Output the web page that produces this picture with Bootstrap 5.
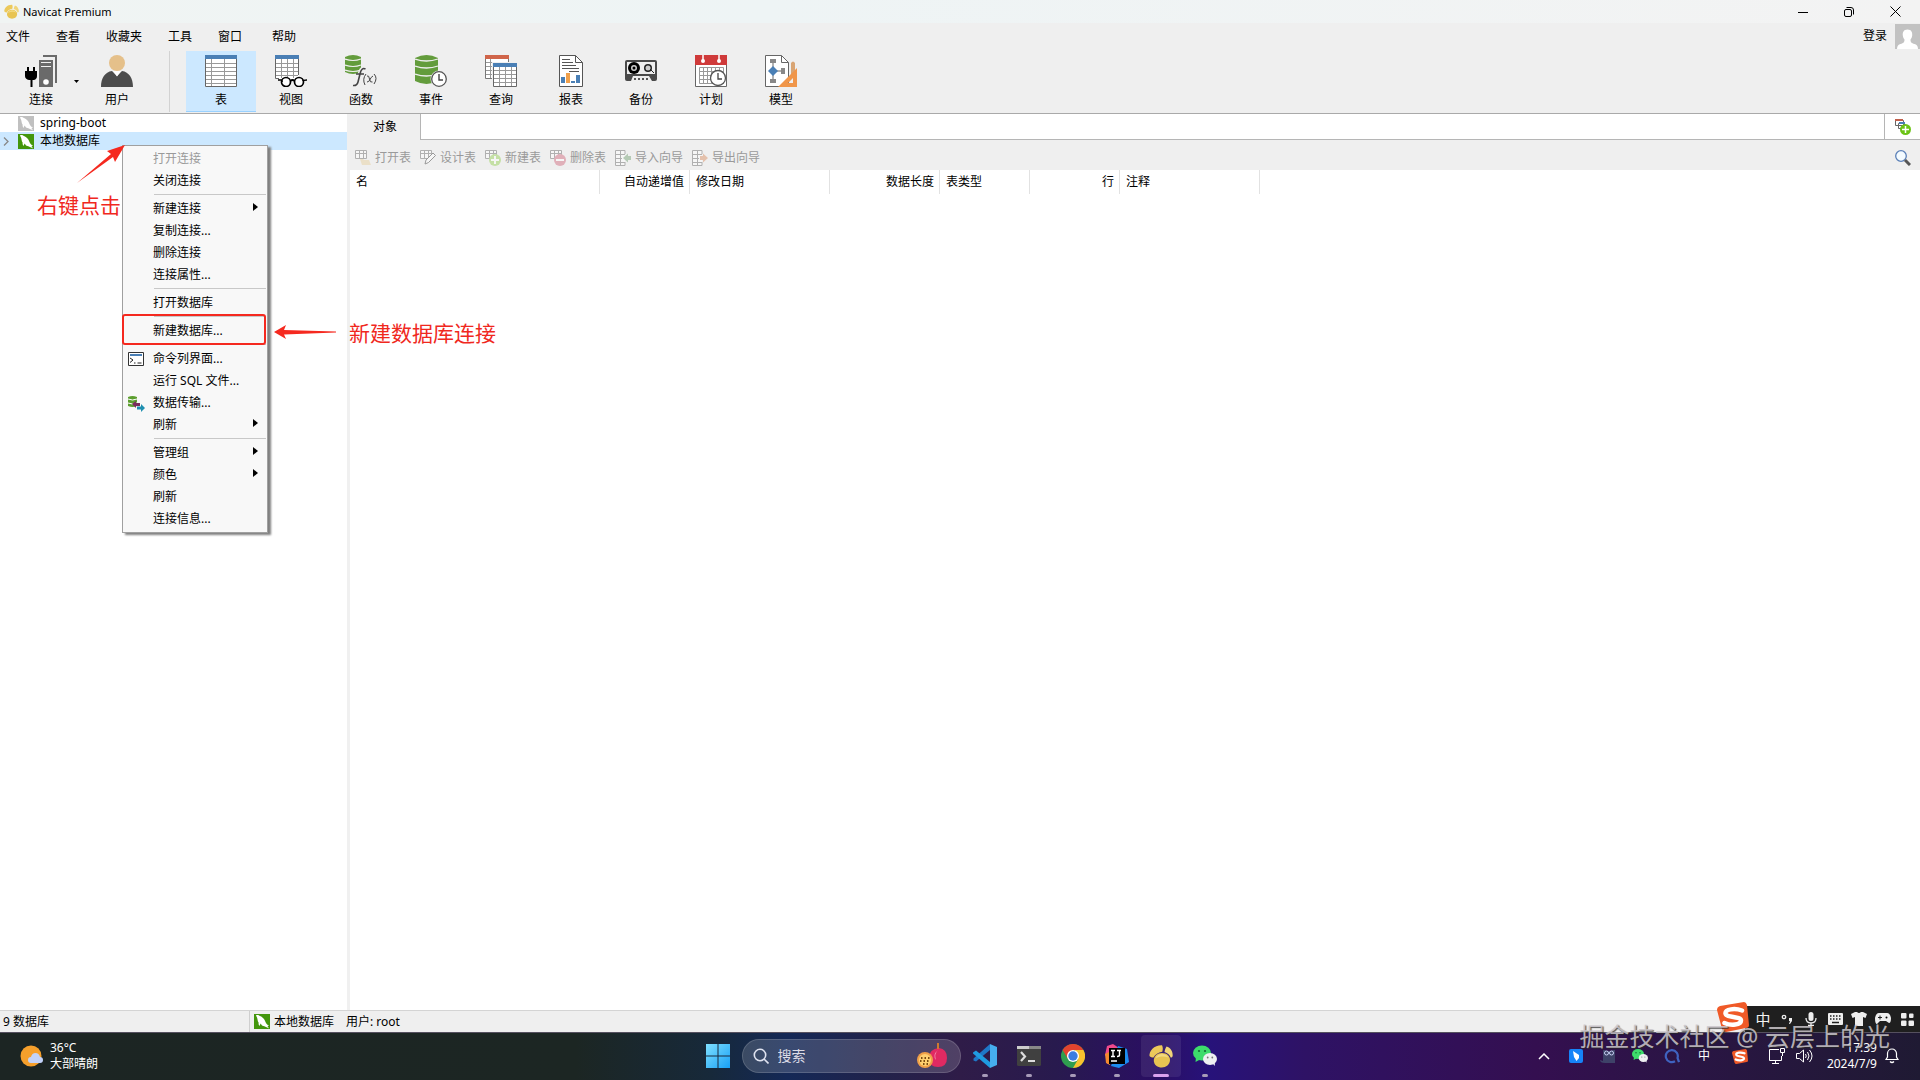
<!DOCTYPE html>
<html lang="zh-CN">
<head>
<meta charset="utf-8">
<meta name="viewport" content="width=device-width, initial-scale=1">
<title>Navicat Premium</title>
<link href="https://cdn.jsdelivr.net/npm/bootstrap@5.3.0/dist/css/bootstrap.min.css" rel="stylesheet">
<style>
body{font-family:"Noto Sans","Noto Sans CJK SC",sans-serif;font-size:12px;line-height:18px;color:#000;background:#fff;overflow:hidden}
button,input{font:inherit;color:inherit}
button{border:0;background:none;padding:0}
a{color:inherit;text-decoration:none}
svg{display:block;flex:none}
.chrome{background:#efefef}
.titlebar{height:23px;padding-right:2px;background:linear-gradient(90deg,#f0f4f3,#eef4f5 40%,#f3f3f3)}
.apptitle{font-size:11px}
.winbtn{width:46px;height:20px}
.menubar{height:26px;padding:2px 0 0 6px;gap:26px}
.account{height:26px}
.toolbar{height:65px;padding:2px 0 1px 12px;border-bottom:1px solid #a9a9a9}
.tool{width:70px;height:61px;padding-top:4px;display:flex;flex-direction:column;align-items:center;gap:4px}
.tool.conn{width:58px}
.tool.active{background:#cce8ff;border-bottom:1px solid #99d1ff}
.caretbtn{width:12px}
.toolsep{width:1px;background:#d2d2d2;margin:0 16px 0 17px}
.sidebar{flex:none;width:347px;background:#fff}
.splitter{flex:none;width:3px;background:#f0f0f0}
.treerow{height:18px;padding-left:18px;gap:6px;position:relative;white-space:nowrap}
.treerow.sel{background:#cce8ff}
.twist{position:absolute;left:3px;top:5px}
.tabs{height:26px;background:#fff;border-bottom:1px solid #b5b5b5}
.tabitem{width:71px;height:26px;background:#efefef;border-right:1px solid #b5b5b5}
.tabadd{width:36px;border-left:1px solid #b5b5b5}
.objbar{height:30px;padding:5px 9px 0 5px;gap:9px;color:#9a9a9a}
.objbar button{gap:4px}
.objbar button:disabled svg{opacity:.45}
.gridhead{table-layout:fixed;width:100%;border-collapse:separate;border-spacing:0}
.gridhead th{height:24px;font-weight:400;padding:0 5px 0 6px;border-right:1px solid #e2e2e2;white-space:nowrap}
.gridhead th:last-child{border:0}
.statusbar{height:22px;border-top:1px solid #d4d4d4}
.st-count{width:250px;padding-left:3px;border-right:1px solid #cfcfcf}
.ctx{left:122px;top:31px;width:146px;padding:2px 0;background:#f8f8f8;border:1px solid #a0a0a0;box-shadow:3px 2px 2px #808080;z-index:5}
.ctx button{display:flex;align-items:center;width:100%;height:22px;padding-left:30px;text-align:left;position:relative}
.ctx button:disabled{color:#9a9a9a}
.ctx hr{margin:2px 1px 3px 31px;border-top:1px solid #c8c8c8;opacity:1}
.ctx .ico{position:absolute;left:5px;top:4px}
.ctx .sub{position:absolute;right:9px;top:5px}
.redbox{left:122px;top:200px;width:144px;height:31px;border:2px solid #f5291f;border-radius:3px;z-index:6;pointer-events:none}
.note{color:#f0281e;font-size:21px;line-height:28px;white-space:nowrap;z-index:7}
.note1{left:37px;top:77px}
.note2{left:349px;top:205px}
.arrow1{left:76px;top:31px;z-index:7}
.arrow2{left:274px;top:210px;z-index:7}
.taskbar{height:48px;padding-bottom:1px;color:#fff;border-top:1px solid #55505f;background:linear-gradient(90deg,#1c2523 0,#1c2623 30%,#17293a 37%,#142856 41%,#22224a 46%,#2f1c48 50%,#281a4e 55%,#2a0f62 60%,#27127a 63%,#2e1265 68%,#340f50 80%,#2a1544 88%,#1f1a33 100%)}
.tside{flex:1 1 0}
.centre{padding-left:10px}
.weather{gap:7px;padding-left:20px;line-height:16px;color:#fff}
.search{width:219px;height:34px;border-radius:17px;background:rgba(255,255,255,.16);border:1px solid rgba(255,255,255,.15);padding:0 12px 0 10px;gap:9px}
.search input{flex:1;min-width:0;background:none;border:0;outline:0;font-size:14px;color:#fff;padding:0}
.search input::placeholder{color:#dcdce6;opacity:1}
.app{width:40px;height:42px;border-radius:4px;display:flex;align-items:center;justify-content:center;position:relative}
.app::after{content:"";position:absolute;bottom:0;width:6px;height:3px;border-radius:2px;background:#a79bb8}
.app.on{background:rgba(255,255,255,.08)}
.app.on::after{width:16px;background:#d9a2ee}
.tray button{width:32px;height:32px;display:flex;align-items:center;justify-content:center}
.tray .slim{width:24px}
.clock{width:64px;padding-right:3px;line-height:16px;text-align:right}
.ime{right:0;bottom:48px;height:26px;width:175px;padding-left:6px;background:#1f1f1f;z-index:8}
.ime button{width:24px;height:26px;display:flex;align-items:center;justify-content:center;color:#f2f2f2;font-size:15px}
.imelogo{position:absolute;left:-28px;top:-4px}
.wm{right:30px;bottom:26px;font-size:25px;line-height:36px;color:rgba(205,200,205,.85);text-shadow:1px 1px 1px rgba(40,40,40,.8);white-space:nowrap;z-index:9}
</style>
<script src="https://cdn.jsdelivr.net/npm/bootstrap@5.3.0/dist/js/bootstrap.bundle.min.js"></script>
</head>
<body class="vh-100 d-flex flex-column position-relative">
<svg width="0" height="0" class="position-absolute" aria-hidden="true">
<symbol id="dolphin" viewBox="0 0 16 15"><rect width="16" height="15"/><path fill="#fff" d="M2 1.200c1.600-.6 3 .1 4 .9 2.600 1 4.400 3 5.400 5.600.7 2 1.600 2.900 3.800 3.900l-1.700.5 1.500 2.300c-1.700-.7-3.300-1.800-4.700-2.200-1.200-.3-2.200-.3-2.800-1.500L6.600 9.500 5.500 12c-.9-1-1-2.300-.9-3.400C3.500 7 3.700 5.300 3 3.500 2.700 2.700 2.200 2 2 1.200z"/></symbol>
<symbol id="sogou" viewBox="0 0 32 30"><path fill="#f05a28" d="M3 4 27 0q2 0 3 3l2 20q0 3-3 3L9 30q-3 0-4-3L0 8q0-3 3-4z"/><path fill="none" stroke="#fff" stroke-width="4.500" stroke-linecap="round" d="M25 8.500C18 6 8 7 8.500 11.500S24 14 24 18.500 14 24 7.500 21"/></symbol>
<symbol id="wechat" viewBox="0 0 24 24"><ellipse cx="9" cy="9" rx="9" ry="7.500" fill="#3ddc6b"/><path d="m3 13-.5 5L8 15z" fill="#3ddc6b"/><circle cx="6" cy="7" r="1.100" fill="#146b33"/><circle cx="12" cy="7" r="1.100" fill="#146b33"/><ellipse cx="17" cy="15" rx="7" ry="6" fill="#eef0f2"/><path d="m19 19 3 3-.5-5z" fill="#eef0f2"/><circle cx="14.700" cy="13.500" r=".9" fill="#777"/><circle cx="19.300" cy="13.500" r=".9" fill="#777"/></symbol>
<symbol id="cat" viewBox="0 0 24 24"><path fill="#ecc95a" d="M.5 12C0 7 5 1 13 1.200c1 2 1 4.300.3 6.500C9 8.500 6.500 10 4.500 13.500 3 13.500 1.500 13 .5 12z"/><path fill="#f0d478" d="M17.500 2.500c4 1 6.500 5 6.200 9.500-.6 1.300-1.200 1.700-2 1.500-.8-2.500-3-4.500-6.200-5.500.4-2 1-4 2-5.500z"/><path fill="#e8c452" d="M4.800 16.500c0-4.500 3.500-7.500 8.200-7.500s8 2.800 8 7c0 4.500-4 7.500-8.200 7.500s-8-2.500-8-7z"/><path fill="#f3da82" d="M6.500 14.500c1-3 3.500-4.500 6.500-4.500s5.500 1.200 6.300 3.500c-4-1.500-9-1.300-12.800 1z"/></symbol>
<symbol id="tri" viewBox="0 0 5 8"><path d="M0 0l5 4-5 4z"/></symbol>
<symbol id="minitable" viewBox="0 0 12 10"><path fill="#fff" stroke="#666" d="M.5.5h11v8H.5zM.5 3.500h11M4.500.5v8M8.500.5v8"/></symbol>
</svg>

<header class="chrome">
 <div class="titlebar d-flex align-items-center">
  <svg class="ms-1" width="15" height="15" viewBox="0 0 24 24"><use href="#cat"/></svg>
  <span class="apptitle ms-1 flex-grow-1">Navicat Premium</span>
  <button class="winbtn d-flex justify-content-center align-items-center" aria-label="最小化"><svg width="10" height="10"><path stroke="#000" d="M0 5.500h10"/></svg></button>
  <button class="winbtn d-flex justify-content-center align-items-center" aria-label="还原"><svg width="10" height="10" fill="none" stroke="#000"><rect x=".5" y="2.500" width="7" height="7" rx="1.500"/><path d="M2.500.5H7q2.500 0 2.500 2.500v4.500"/></svg></button>
  <button class="winbtn d-flex justify-content-center align-items-center" aria-label="关闭"><svg width="11" height="11"><path stroke="#000" d="M.5.5l10 10M10.500.5l-10 10"/></svg></button>
 </div>
 <div class="d-flex justify-content-between">
  <nav class="menubar d-flex align-items-center"><a href="#">文件</a><a href="#">查看</a><a href="#">收藏夹</a><a href="#">工具</a><a href="#">窗口</a><a href="#" class="ms-1">帮助</a></nav>
  <div class="account d-flex align-items-center gap-2"><a href="#">登录</a><svg width="25" height="25" viewBox="0 0 25 25"><path fill="#c2c2c2" d="M0 0h25v25H0z"/><path fill="#fff" d="M12.500 5.500c4 0 5 3 4.700 6-.2 2-1 3-1.700 4 0 3 1 3.500 4 4.500 2 .6 3.500 2 3.500 5H2c0-3 1.500-4.400 3.500-5 3-1 4-1.500 4-4.500-.7-1-1.500-2-1.700-4-.3-3 .7-6 4.700-6z"/></svg></div>
 </div>
 <div class="toolbar d-flex">
  <button class="tool conn"><svg width="32" height="32"><path fill="#6a6a6a" d="M18 0h14v28h-2V2H18z"/><path fill="#6a6a6a" d="M14 5h14v27H14z"/><path fill="#fff" d="M16 7h10v1H16zM16 11h10v1H16z" opacity=".9"/><circle cx="21" cy="27" r="2.800" fill="#fff"/><path d="M2 12h2v4h4v-4h2v4h2v5q0 3-3 4H7.500v7h-2v-7H4q-4-1-4-4v-5h2z"/></svg><span>连接</span></button>
  <button class="caretbtn" aria-label="连接类型"><svg class="mx-auto" width="5" height="3"><path d="M0 0h5L2.500 3z"/></svg></button>
  <button class="tool"><svg width="32" height="32"><circle cx="16" cy="8" r="8" fill="#e5c08a"/><path fill="#4c4c4c" d="M0 32c0-9 4-15 11-16l5 5 5-5c7 1 11 7 11 16z"/><path fill="#fff" d="m12 16 4 5.500 4-5.500z"/></svg><span>用户</span></button>
  <div class="toolsep"></div>
  <button class="tool active"><svg width="32" height="32"><path fill="#fff" d="M0 0h32v32H0z"/><path stroke="#999" d="M1 8.500h30M1 12.500h30M1 16.500h30M1 20.500h30M1 24.500h30M1 28.500h30M6.500 4v28M19.500 4v28"/><path fill="none" stroke="#666" d="M.5.5h31v31H.5z"/><path fill="#4a7fb5" d="M0 0h32v4H0z"/></svg><span>表</span></button>
  <button class="tool"><svg width="32" height="32"><path fill="#fff" d="M0 0h24v24H0z"/><path stroke="#999" d="M1 8.500h22M1 12.500h22M1 16.500h22M1 20.500h22M6.500 4v19M12.500 4v19M18.500 4v19"/><path fill="none" stroke="#666" d="M4 23.500H.5V.5h23V20"/><path fill="#4a7fb5" d="M0 0h24v4H0z"/><circle cx="11" cy="27" r="4.500" fill="#fff" stroke="#000" stroke-width="1.700"/><circle cx="24" cy="27" r="4.500" fill="#fff" stroke="#000" stroke-width="1.700"/><path fill="none" stroke="#000" stroke-width="1.700" d="M3 25h3q1 0 1 2M15.500 26q2-2 4 0M28 26q0-1 4-1"/></svg><span>视图</span></button>
  <button class="tool"><svg width="32" height="32"><path fill="#639c3c" d="M0 2q8-4 16 0v15q-8 4-16 0z"/><path fill="none" stroke="#efefef" stroke-width="1.200" d="M0 4q8 3 16 0M0 10q8 3 16 0M0 15q8 3 16 0"/><g fill="none" stroke="#efefef" stroke-width="5"><path d="M20 14q-4-1-5 6l-2 9"/></g><path fill="none" stroke="#444" stroke-width="1.600" d="M20.500 14q-4-2-5.500 5l-2 8q-1 4-5 3.500M11 19h8"/><path fill="none" stroke="#444" d="M21 19q-4 5-1 11M29 19q4 4 0 10M22 21q2-1 2.500 3t3 3M28 21q-2 1-3 3.500T22 27"/></svg><span>函数</span></button>
  <button class="tool"><svg width="32" height="32"><path fill="#639c3c" d="M0 3q11.500-6 23 0v23q-11.500 6-23 0z"/><path fill="none" stroke="#efefef" stroke-width="1.300" d="M0 4q11.500 4 23 0M0 11q11.500 4 23 0M0 19q11.500 4 23 0"/><circle cx="24" cy="24" r="8.500" fill="#efefef"/><circle cx="24" cy="24" r="7.300" fill="#fff" stroke="#555" stroke-width="1.300"/><path fill="none" stroke="#444" stroke-width="1.400" d="M24 19v6h4"/></svg><span>事件</span></button>
  <button class="tool"><svg width="32" height="32"><path fill="#fff" stroke="#777" d="M.5.5h23v23H.5z"/><path stroke="#999" d="M1 7.500h22M1 11.500h22M1 15.500h22M1 19.500h22M5.500 4v19"/><path fill="#d0654a" d="M0 0h24v4H0z"/><path fill="#efefef" d="M7 7h25v25H7z"/><path fill="#fff" stroke="#666" d="M8.500 8.500h23v23h-23z"/><path stroke="#999" d="M9 15.500h22M9 19.500h22M9 23.500h22M9 27.500h22M14.500 12v19M20.500 12v19M26.500 12v19"/><path fill="#4a7fb5" d="M8 8h24v4H8z"/></svg><span>查询</span></button>
  <button class="tool"><svg width="32" height="32"><path fill="#fff" stroke="#555" d="M4.500.5h16l7 7v24h-23z"/><path fill="none" stroke="#555" d="M20.500.5v7h7M7 4.500h8M7 7.500h11M7 10.500h14M7 13.500h17M14 16.500h10"/><path fill="#4a7fb5" d="M6 22h4v6H6zM16 26h4v2h-4zM21 20h4v8h-4z"/><path fill="#f0a04b" d="M11 18h4v10h-4z"/></svg><span>报表</span></button>
  <button class="tool"><svg width="32" height="32"><path fill="#4a4a4a" d="M2 5h28q2 0 2 2v17q0 2-2 2H2q-2 0-2-2V7q0-2 2-2z"/><path fill="#eee" d="M2 7h28v12H2z"/><circle cx="9" cy="13" r="6" /><circle cx="9" cy="13" r="3" fill="#ccc"/><circle cx="9" cy="13" r="1.500"/><circle cx="23" cy="13" r="4" fill="#222"/><circle cx="23" cy="13" r="2.500" fill="#ccc"/><path stroke="#222" d="m25 14 4 4"/><path fill="#eee" d="m8 21-2 5h21l-3-5z"/><path stroke="#555" stroke-width="2" stroke-dasharray="2 2" d="M9 24h15"/></svg><span>备份</span></button>
  <button class="tool"><svg width="32" height="32"><path fill="#fff" stroke="#666" d="M.5.500h31v31H.5z"/><path fill="#cf3a3a" d="M0 0h32v10H0z"/><path stroke="#fff" stroke-width="1.500" d="M8 0v6M24 0v6"/><circle cx="8" cy="6" r="2" fill="#fff"/><circle cx="24" cy="6" r="2" fill="#fff"/><path fill="none" stroke="#999" d="M4.500 12.500h24v16h-24zM4.500 16.500h24M4.500 20.500h24M4.500 24.500h24M8.500 12v16M12.500 12v16M16.500 12v16M20.500 12v16M24.500 12v16"/><circle cx="23" cy="23" r="7.500" fill="#fff" stroke="#555" stroke-width="1.300"/><path fill="none" stroke="#444" stroke-width="1.300" d="M23 18v6h4"/></svg><span>计划</span></button>
  <button class="tool"><svg width="32" height="32"><path fill="#fff" stroke="#666" d="M.5.500h16l7 7v24H.5z"/><path fill="none" stroke="#666" d="M16.500.5v7h7M8 6v22M8 16h10"/><path fill="#888" d="M5 4h6v4H5zM5 24h6v4H5zM16 13h4v6h-4z"/><path fill="#4a7fb5" d="m8 11 5 5-5 5-5-5z"/><path fill="#d9a574" d="M26 8q2-3 4 0v9l-4 4z"/><path fill="#f0964a" d="M32 13v19H13zM28 23l-5 5h5z" fill-rule="evenodd"/></svg><span>模型</span></button>
 </div>
</header>

<main class="d-flex flex-grow-1 position-relative">
 <aside class="sidebar">
  <div class="treerow d-flex align-items-center"><svg width="16" height="15" fill="#c0c0c0"><use href="#dolphin"/></svg><span>spring-boot</span></div>
  <div class="treerow sel d-flex align-items-center"><svg class="twist" width="7" height="9" fill="none" stroke="#888" stroke-width="1.300"><path d="m1 .5 4 4-4 4"/></svg><svg width="16" height="15" fill="#43960c"><use href="#dolphin"/></svg><span>本地数据库</span></div>
 </aside>
 <div class="splitter"></div>
 <section class="flex-grow-1">
  <div class="tabs d-flex">
   <button class="tabitem">对象</button>
   <div class="flex-grow-1"></div>
   <button class="tabadd d-flex align-items-center justify-content-center" aria-label="新建选项卡"><svg width="16" height="16"><path fill="#fff" stroke="#666" d="M.5 1.500h8v5h-8zM3.500 4.500h6v5h-6z"/><path fill="#c0604c" d="M0 0h8v2H0z"/><path fill="#4a7fb5" d="M4 3h6v2H4z"/><circle cx="10.500" cy="10.500" r="5.500" fill="#6cc416"/><path stroke="#fff" stroke-width="1.500" d="M10.500 7v7M7 10.500h7"/></svg></button>
  </div>
  <div class="objbar chrome d-flex align-items-center">
   <button disabled class="d-flex align-items-center"><svg width="16" height="16"><use href="#minitable" width="12" height="10"/><path fill="#e8cf9a" d="M5 9h3l1 1h5l2 5H7z"/></svg>打开表</button>
   <button disabled class="d-flex align-items-center"><svg width="16" height="16"><use href="#minitable" width="12" height="10"/><path fill="#fff" stroke="#333" d="m5 14 1-4 7-7 2.500 2.500-7 7z"/></svg>设计表</button>
   <button disabled class="d-flex align-items-center"><svg width="16" height="16"><use href="#minitable" width="12" height="10"/><circle cx="10" cy="10" r="6" fill="#93cf50"/><path stroke="#fff" stroke-width="2" d="M10 6v8M6 10h8"/></svg>新建表</button>
   <button disabled class="d-flex align-items-center"><svg width="16" height="16"><use href="#minitable" width="12" height="10"/><circle cx="10" cy="10" r="6" fill="#d0647a"/><path stroke="#fff" stroke-width="2" d="M6 10h8"/></svg>删除表</button>
   <button disabled class="d-flex align-items-center"><svg width="16" height="16"><path fill="#fff" stroke="#666" d="M10 4V.5H.5v15H10V12M.5 4.500H10M.5 8.500H7M.5 12.500H10M5.500.5v15"/><path fill="#6f9f6f" d="m8 8 5-4.500V6h3v4h-3v2.500z"/></svg>导入向导</button>
   <button disabled class="d-flex align-items-center"><svg width="16" height="16"><path fill="#fff" stroke="#666" d="M10 4V.5H.5v15H10V12M.5 4.500H10M.5 8.500H7M.5 12.500H10M5.500.5v15"/><path fill="#d88a5c" d="m16 8-5-4.500V6H8v4h3v2.500z"/></svg>导出向导</button>
   <button class="ms-auto" aria-label="查找"><svg width="16" height="16"><circle cx="6" cy="6" r="5.300" fill="#f4fbff" stroke="#5b80b8" stroke-width="1.300"/><path stroke="#555" stroke-width="3" d="m10 10 5 5"/></svg></button>
  </div>
  <table class="gridhead">
   <colgroup><col width="250"><col width="90"><col width="140"><col width="110"><col width="90"><col width="90"><col width="140"><col></colgroup>
   <thead><tr><th>名</th><th class="text-end">自动递增值</th><th>修改日期</th><th class="text-end">数据长度</th><th>表类型</th><th class="text-end">行</th><th>注释</th><th></th></tr></thead>
  </table>
 </section>

 <div class="ctx position-absolute" role="menu">
  <button disabled>打开连接</button><button>关闭连接</button><hr>
  <button>新建连接<svg class="sub" width="5" height="8"><use href="#tri"/></svg></button><button>复制连接...</button><button>删除连接</button><button>连接属性...</button><hr>
  <button>打开数据库</button><hr>
  <button>新建数据库...</button><hr>
  <button><svg class="ico" width="16" height="14"><path fill="#fff" stroke="#333" d="M.5.500h15v13H.5z"/><path fill="#4a7fb5" d="M2 2h12v2H2z"/><path fill="none" stroke="#222" d="m2 6 3 2-3 2.500M9.500 11h4M6 11h1.500"/></svg>命令列界面...</button><button>运行 SQL 文件...</button>
  <button><svg class="ico" width="17" height="16"><path fill="#5c9e2e" d="M0 1q4.500-2 9 0v9q-4.500 2-9 0z"/><path fill="none" stroke="#fff" d="M0 3q4.500 2 9 0M0 7q4.500 2 9 0"/><path fill="#7a2d5e" d="m4 8 4-3v2h4v3H8v2z"/><path fill="#1f8fb0" d="m17 12-4-4v2.500H9v3h4V16z"/></svg>数据传输...</button><button>刷新<svg class="sub" width="5" height="8"><use href="#tri"/></svg></button><hr>
  <button>管理组<svg class="sub" width="5" height="8"><use href="#tri"/></svg></button><button>颜色<svg class="sub" width="5" height="8"><use href="#tri"/></svg></button><button>刷新</button><button>连接信息...</button>
 </div>
 <div class="redbox position-absolute"></div>
 <svg class="arrow1 position-absolute" width="50" height="40"><path fill="#f5291f" d="M1 38 35 9l-4-3L49 0 39 17l-2-5z"/></svg>
 <div class="note note1 position-absolute">右键点击</div>
 <svg class="arrow2 position-absolute" width="64" height="16"><path fill="#f5291f" d="M0 8 12 1l-2 5 52 1.500v1L10 10.500 12 15z"/></svg>
 <div class="note note2 position-absolute">新建数据库连接</div>
</main>

<footer class="statusbar chrome d-flex align-items-stretch">
 <span class="st-count d-flex align-items-center">9 数据库</span>
 <span class="d-flex align-items-center gap-1 ps-1"><svg width="16" height="15" fill="#43960c"><use href="#dolphin"/></svg>本地数据库</span>
 <span class="d-flex align-items-center ps-2 ms-1">用户: root</span>
</footer>

<div class="taskbar d-flex align-items-center">
 <div class="tside"><button class="weather d-flex align-items-center text-start"><svg width="23" height="22"><circle cx="11" cy="11" r="10.500" fill="#f6a02c"/><path fill="#c3d3fa" d="M11 18q-3 0-3-3t3-3q1-4 4.500-4t4.500 4q3 0 3 3t-3 3z"/></svg><span>36°C<br>大部晴朗</span></button></div>
 <div class="centre d-flex align-items-center">
  <button aria-label="开始" class="me-2 pe-1"><svg width="24" height="24"><defs><linearGradient id="wg" x1="0" y1="0" x2="1" y2="1" ><stop stop-color="#7fe0ff"/><stop offset="1" stop-color="#18a0f5"/></linearGradient></defs><path fill="url(#wg)" d="M0 0h11.500v11.500H0zM12.500 0H24v11.500H12.500zM0 12.500h11.500V24H0zM12.500 12.500H24V24H12.500z"/></svg></button>
  <label class="search d-flex align-items-center me-1"><svg width="16" height="16" fill="none" stroke="#dfe3f0" stroke-width="1.600"><circle cx="7" cy="7" r="5.700"/><path d="m11 11 4.500 4.500"/></svg><input type="text" placeholder="搜索" aria-label="搜索"><svg width="31" height="26"><path fill="#e02a62" d="M22 5q8 1 8 10t-9 9-9-9 10-10z"/><path fill="#f58ab0" d="M21 7q-4 4-2 10-4-5 2-10z"/><path stroke="#d07830" stroke-width="2" d="M21 0v6"/><circle cx="8" cy="17" r="8" fill="#f0a048"/><circle cx="8" cy="17" r="6" fill="#ffd070"/><path stroke="#7a4a10" stroke-width="2" stroke-dasharray="1.500 2" d="M4 15h9M3 18h10M6 21h5"/></svg></label>
  <div class="d-flex gap-1">
   <button class="app" aria-label="VS Code"><svg width="24" height="24"><path fill="#1f78c8" d="M17 0v6L3 17.500.5 16.500V14.500z"/><path fill="#1f9be0" d="M0 8.500 3 6.500 17 18v6L0 9.500z"/><path fill="#46aeee" d="m17 0 7 3v18l-7 3z"/></svg></button>
   <button class="app" aria-label="终端"><svg width="24" height="20"><rect width="24" height="20" rx="1.500" fill="#404040"/><path fill="#ccc" d="M0 0h24v3H0z"/><path fill="#888" d="M12 0h12v3H12z"/><path fill="none" stroke="#ddd" stroke-width="2.200" d="m4 6 4 4.500L4 15M11 15h7"/></svg></button>
   <button class="app" aria-label="Chrome"><svg width="24" height="24" viewBox="0 0 24 24"><circle cx="12" cy="12" r="12" fill="#2f9e4f"/><path fill="#e2432e" d="M1.600 6A12 12 0 0 1 22.400 6H12L7 15z"/><path fill="#f9c22e" d="M22.400 6A12 12 0 0 1 12 24l5.200-9L14 6z"/><circle cx="12" cy="12" r="6" fill="#fff"/><circle cx="12" cy="12" r="4.700" fill="#3b7de0"/></svg></button>
   <button class="app" aria-label="IntelliJ IDEA"><svg width="24" height="24"><path fill="#f04a8c" d="m2 2 6-2 6 4-4 14-8 2 1-6-3-3z"/><path fill="#f58a2e" d="m0 10 6-3-1 14-4-2z"/><path fill="#1c8cf0" d="m13 2 9 3 2 13-10 6-8-2z"/><path fill="#000" d="M4 4h16v16H4z"/><path fill="none" stroke="#fff" stroke-width="1.400" d="M6 6.500h4M8 6.500v6M6 12.500h4M12 6.500h4M14.500 6.500v4.500q0 1.500-2.500 1.500M6 17h6"/></svg></button>
   <button class="app on" aria-label="Navicat"><svg width="24" height="24"><use href="#cat"/></svg></button>
   <button class="app" aria-label="微信"><svg width="24" height="24"><use href="#wechat"/></svg></button>
  </div>
 </div>
 <div class="tside tray d-flex align-items-center justify-content-end">
  <button aria-label="显示隐藏的图标"><svg width="12" height="7" fill="none" stroke="#fff" stroke-width="1.500"><path d="m1 6 5-5 5 5"/></svg></button>
  <button aria-label="飞鸟"><svg width="14" height="14"><rect width="14" height="14" rx="2" fill="#1684f8"/><path fill="#fff" d="m4 2 6 4v3L7.500 12 5 8z"/></svg></button>
  <button aria-label="猫"><svg width="16" height="14"><path fill="#3e4268" d="M3 1h2l2 1h4l2-1h2v13H5q-5 0-5-3l3 1z"/><circle cx="6.500" cy="4" r="2" fill="none" stroke="#c8d0f4"/><circle cx="11.500" cy="4" r="2" fill="none" stroke="#c8d0f4"/></svg></button>
  <button aria-label="微信通知"><svg width="16" height="16"><use href="#wechat"/></svg></button>
  <button aria-label="浏览器"><svg width="16" height="16" fill="none" stroke="#3f63c0" stroke-width="2.200"><path d="M11 13.200A6 6 0 1 1 13.500 10L15 14"/></svg></button>
  <button aria-label="输入法语言">中</button>
  <button class="ms-1" aria-label="搜狗"><svg width="16" height="15"><use href="#sogou"/></svg></button>
  <button class="slim ms-2 me-1" aria-label="网络"><svg width="17" height="16" fill="none" stroke="#fff"><path d="M11 1.500H1.500v11h12V8M4 15.500h7M7.500 13v2M12.500.500h4v4h-4zM14.500 5v3"/></svg></button>
  <button class="slim" aria-label="音量"><svg width="17" height="14" fill="none" stroke="#fff"><path d="M.5 4.500h3l4-3.500v12l-4-3.500h-3zM9.500 5q1.500 2 0 4M11.500 3q3 4 0 8M13.500 1q5 6 0 12"/></svg></button>
  <div class="clock">17:39<br>2024/7/9</div>
  <button class="slim me-3" aria-label="通知"><svg width="14" height="16" fill="none" stroke="#fff" stroke-width="1.200"><path d="M1 11.500h12L11.500 9V5.500a4.500 4.500 0 0 0-9 0V9zM5 13.500q2 2 4 0"/></svg></button>
 </div>
</div>

<div class="ime position-absolute d-flex">
 <svg class="imelogo" width="32" height="30"><use href="#sogou"/></svg>
 <button>中</button>
 <button aria-label="标点"><svg width="12" height="12"><circle cx="3" cy="4" r="1.700" fill="none" stroke="#eee" stroke-width="1.300"/><path fill="#eee" d="M8 5h3v3l-2 3H8l1-3H8z"/></svg></button>
 <button aria-label="语音"><svg width="12" height="14"><rect x="3.500" width="5" height="9" rx="2.500" fill="#eee"/><path fill="none" stroke="#eee" stroke-width="1.300" d="M1 6q0 5 5 5t5-5M6 11v2.500M3 13.300h6"/></svg></button>
 <button aria-label="键盘"><svg width="15" height="12"><rect width="15" height="12" rx="1" fill="#eee"/><path stroke="#1f1f1f" stroke-width="1.500" stroke-dasharray="1.500 1.500" d="M2 3h12M2 6h12"/><path stroke="#1f1f1f" stroke-width="1.500" d="M4 9.500h7"/></svg></button>
 <button aria-label="皮肤"><svg width="16" height="14"><path fill="#eee" d="M0 2 4 0h2q2 2 4 0h2l4 2-1.500 4-2.500-1v9H4V5L1.500 6z"/></svg></button>
 <button aria-label="游戏"><svg width="16" height="13"><path fill="#eee" d="M4 0h8q3 0 4 5 0 5-2 5l-3-2H5l-3 3Q0 11 0 5q1-5 4-5z"/><path stroke="#1f1f1f" d="M3 4.500h4M5 2.500v4"/><circle cx="11.500" cy="4.500" r="1" /></svg></button>
 <button aria-label="更多"><svg width="13" height="13" fill="#eee"><rect width="5.500" height="5.500" rx="1"/><rect y="7.500" width="5.500" height="5.500" rx="1"/><rect x="7.500" y="7.500" width="5.500" height="5.500" rx="1"/><rect x="8" y=".5" width="4.500" height="4.500" rx="1"/></svg></button>
</div>
<div class="wm position-absolute">掘金技术社区 @ 云层上的光</div>
</body>
</html>
